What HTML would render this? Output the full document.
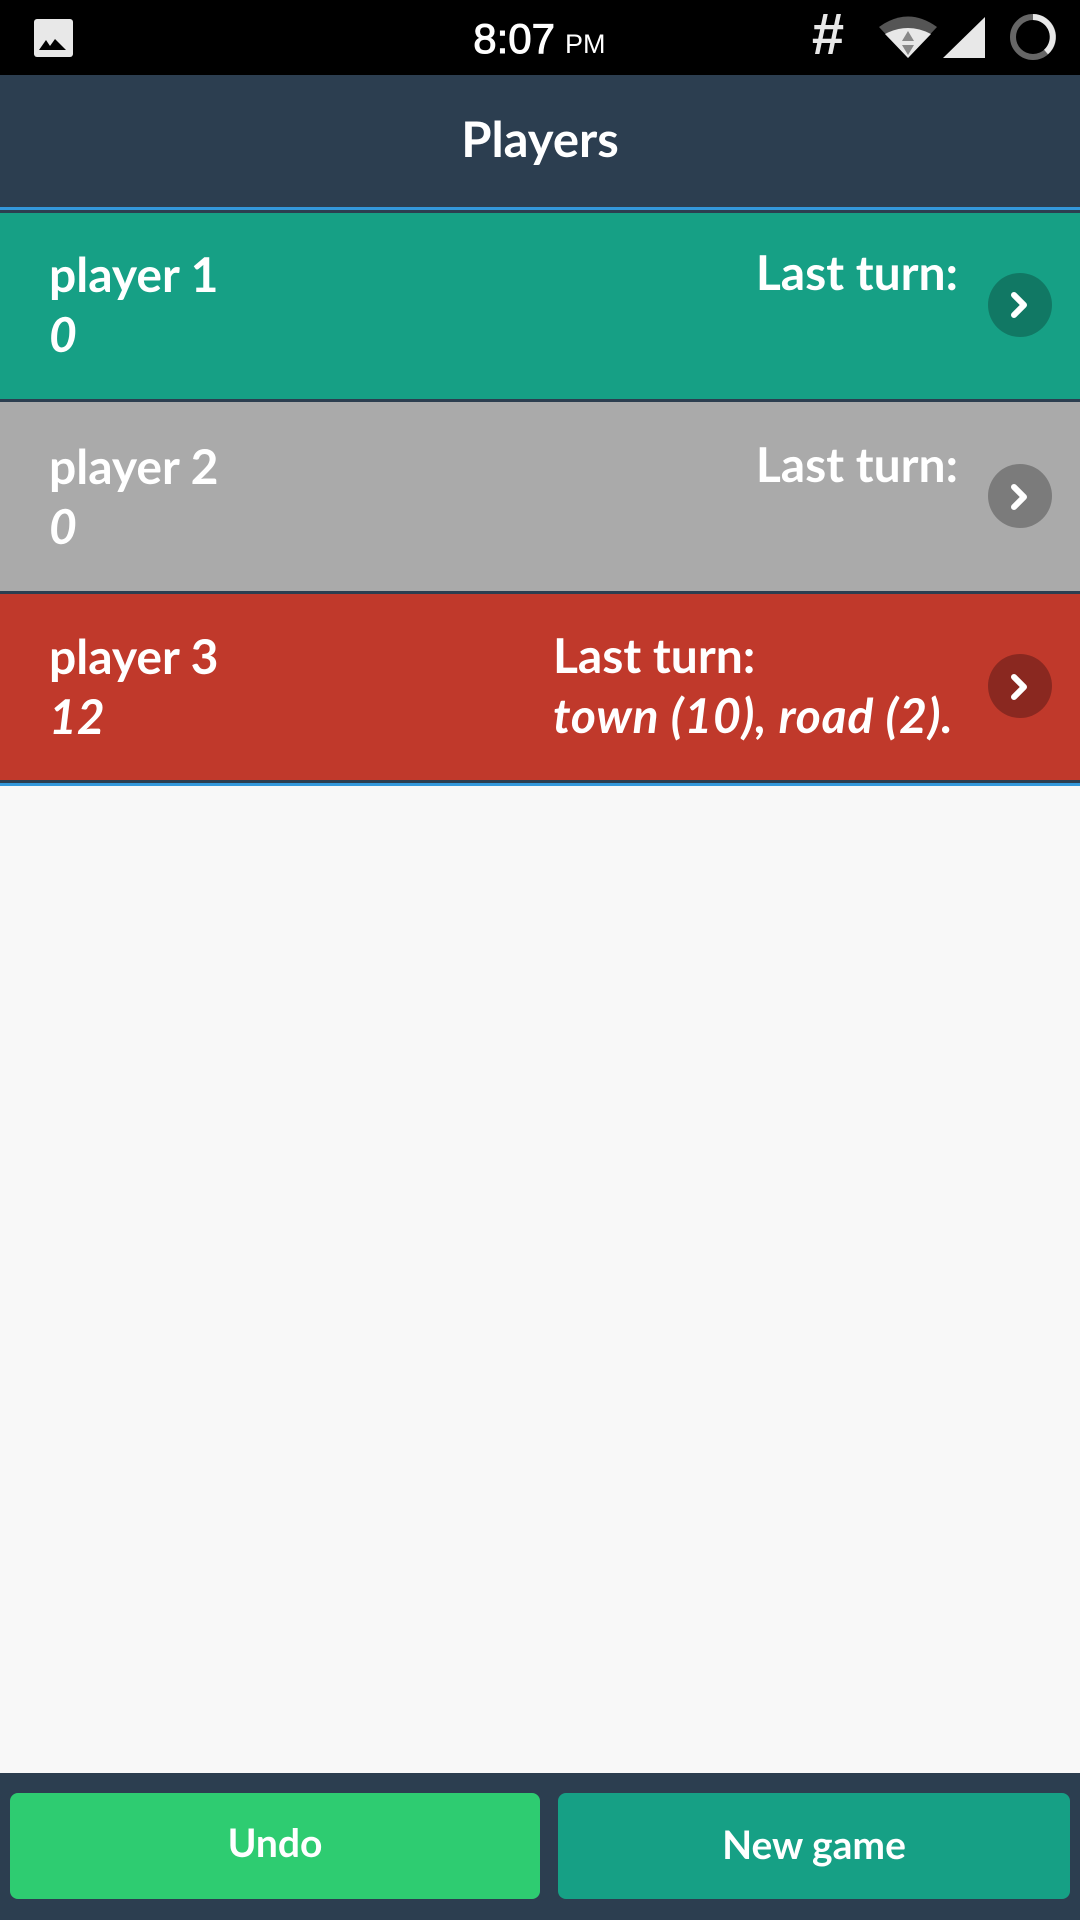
<!DOCTYPE html>
<html><head><meta charset="utf-8"><style>
*{margin:0;padding:0;box-sizing:border-box}
body{width:1080px;height:1920px;background:#f8f8f8;font-family:"Lato","Liberation Sans",sans-serif;position:relative;overflow:hidden;color:#fff}
.sb{position:absolute;top:0;left:0;width:1080px;height:75px;background:#000}
.hd{position:absolute;top:75px;left:0;width:1080px;height:132px;background:#2c3e50;text-align:center;line-height:128px;font-size:49px;font-weight:bold}
.bl{position:absolute;left:0;width:1080px;height:3px;background:#3498db}
.dk{position:absolute;left:0;width:1080px;height:3px;background:#2c3e50}
.row{position:absolute;left:0;width:1080px}
.nm{position:absolute;left:49px;font-size:48px;font-weight:bold}
.sc{position:absolute;left:49px;font-size:48px;font-weight:bold;font-style:italic}
.lt{position:absolute;right:122px;font-size:48px;font-weight:bold;text-align:left}
.cv{position:absolute;left:988px;width:64px;height:64px;border-radius:50%}
.ft{position:absolute;top:1773px;left:0;width:1080px;height:147px;background:#2c3e50}
.btn{position:absolute;top:1793px;height:106px;border-radius:8px;text-align:center;line-height:100px;font-size:39px;font-weight:bold}
</style></head><body>
<div class="sb">
<svg width="1080" height="75" style="position:absolute;left:0;top:0">
<rect x="34" y="19" width="39" height="38" rx="3" fill="#e8e8e8"/>
<path d="M39 50 L46 40 L50 46 L55 39 L66 50 Z" fill="#000"/>
<text x="555" y="53" text-anchor="end" font-family="Liberation Sans" font-size="42" stroke="#fff" stroke-width="1" fill="#fff">8:07</text>
<text x="565" y="53" font-family="Liberation Sans" font-size="27" fill="#fff">PM</text>
<text x="828" y="54" text-anchor="middle" font-family="Liberation Sans" font-weight="bold" font-size="58" fill="#e8e8e8">#</text>
<path d="M879 27 Q908 6 937 27 L908 58 Z" fill="#555"/>
<path d="M885 34 Q908 22 931 34 L908 58 Z" fill="#e8e8e8"/>
<path d="M908 31 L902 41 L914 41 Z M902 45 L914 45 L908 55 Z" fill="#888"/>
<path d="M943 58 L985 17 L985 58 Z" fill="#e8e8e8"/>
<circle cx="1033" cy="37" r="20" fill="none" stroke="#666" stroke-width="6"/>
<path d="M1033 17 A20 20 0 0 1 1046 52" fill="none" stroke="#e8e8e8" stroke-width="6"/>
</svg>
</div>
<div class="hd">Players</div>
<div class="bl" style="top:207px"></div><div class="dk" style="top:210px"></div>

<div class="row" style="top:213px;height:186px;background:#16a085">
<div class="nm" style="top:33px">player 1</div>
<div class="sc" style="top:93px">0</div>
<div class="lt" style="top:31px">Last turn:</div>
<div class="cv" style="top:60px;background:#117864"></div>
</div>
<div class="dk" style="top:399px"></div>
<div class="row" style="top:402px;height:189px;background:#aaaaaa">
<div class="nm" style="top:36px">player 2</div>
<div class="sc" style="top:96px">0</div>
<div class="lt" style="top:34px">Last turn:</div>
<div class="cv" style="top:62px;background:#7b7b7b"></div>
</div>
<div class="dk" style="top:591px"></div>
<div class="row" style="top:594px;height:186px;background:#c0392b">
<div class="nm" style="top:34px">player 3</div>
<div class="sc" style="top:94px">12</div>
<div class="lt" style="top:32px;left:553px;right:auto;line-height:60px">Last turn:<br><i style="display:block;letter-spacing:0.8px;white-space:nowrap">town (10), road (2).</i></div>
<div class="cv" style="top:60px;background:#8a2820"></div>
</div>
<div class="dk" style="top:780px"></div><div class="bl" style="top:783px"></div>

<svg width="1080" height="800" style="position:absolute;left:0;top:0">
<g fill="none" stroke="#fff" stroke-width="6" stroke-linecap="round" stroke-linejoin="round">
<path d="M1014 295 L1024 305 L1014 315"/>
<path d="M1014 487 L1024 497 L1014 507"/>
<path d="M1014 677 L1024 687 L1014 697"/>
</g></svg>

<div class="ft"></div>
<div class="btn" style="left:10px;width:530px;background:#2ecc71">Undo</div>
<div class="btn" style="left:558px;width:512px;background:#16a085;line-height:104px">New game</div>
</body></html>
